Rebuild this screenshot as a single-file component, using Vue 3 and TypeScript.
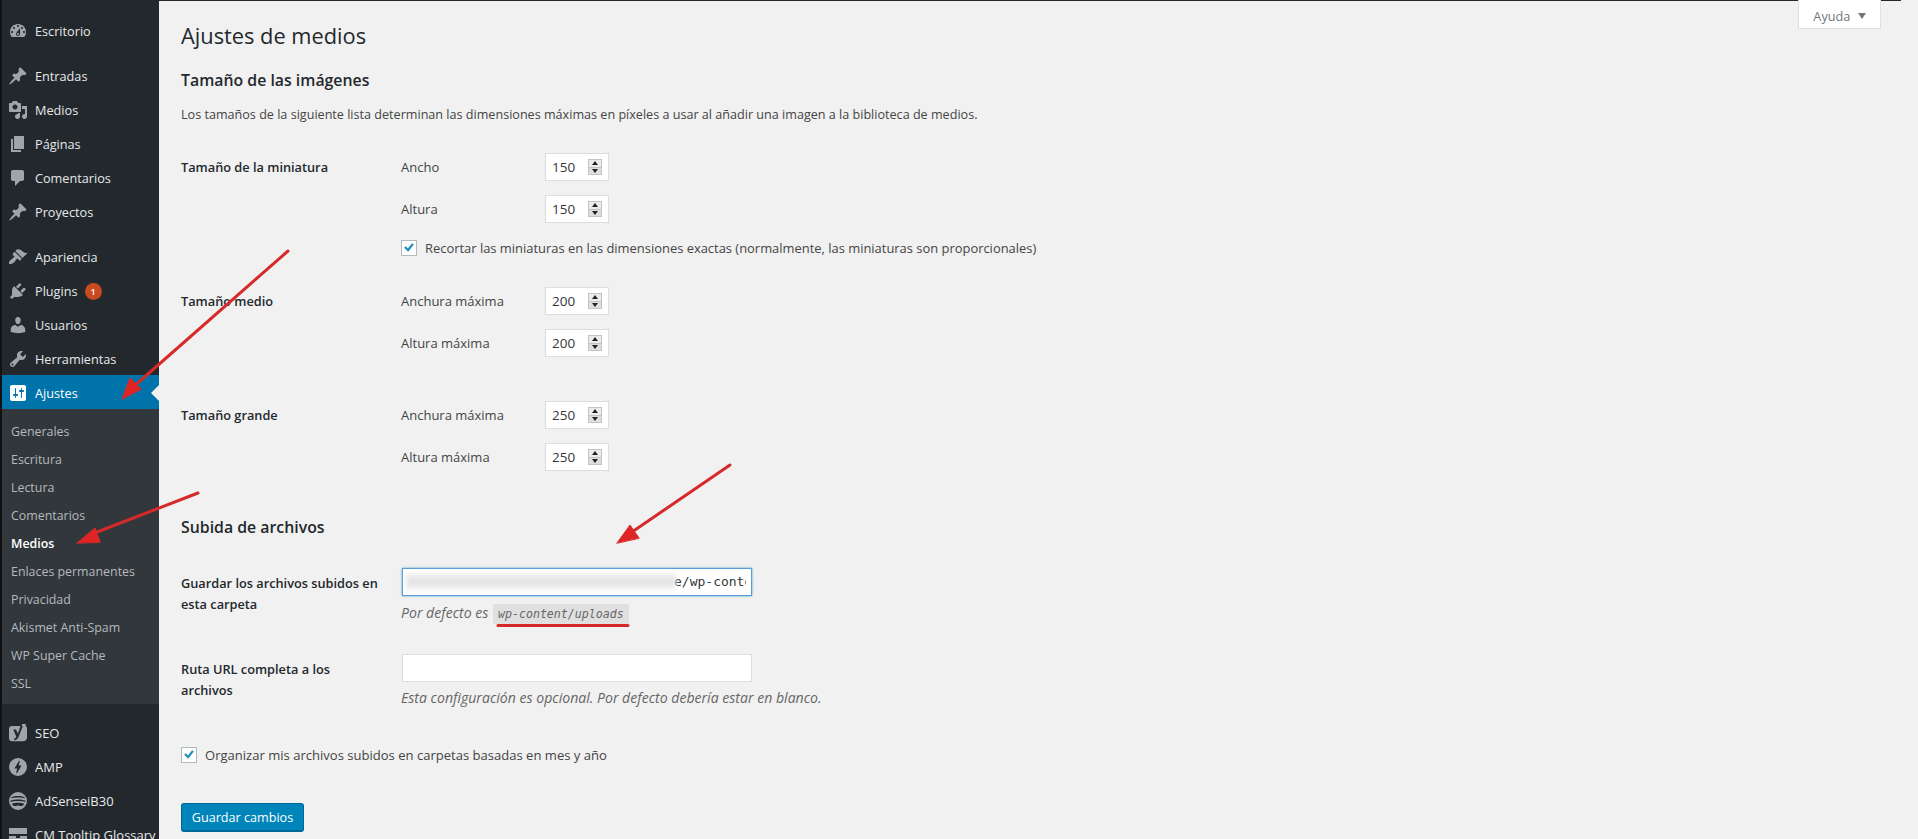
<script setup lang="ts">
interface Item { label: string; icon: string; gapBefore?: boolean; badge?: string }
const icons: Record<string, string> = {
  dash: 'M3.76 16h12.48c1.1-1.37 1.76-3.11 1.76-5 0-4.42-3.58-8-8-8s-8 3.58-8 8c0 1.89.66 3.63 1.76 5zM10 4c.55 0 1 .45 1 1s-.45 1-1 1-1-.45-1-1 .45-1 1-1zM6 6c.55 0 1 .45 1 1s-.45 1-1 1-1-.45-1-1 .45-1 1-1zm8 0c.55 0 1 .45 1 1s-.45 1-1 1-1-.45-1-1 .45-1 1-1zm-5.37 5.55L12 7v6c0 1.1-.9 2-2 2s-2-.9-2-2c0-.57.24-1.08.63-1.45zM4 10c.55 0 1 .45 1 1s-.45 1-1 1-1-.45-1-1 .45-1 1-1zm12 0c.55 0 1 .45 1 1s-.45 1-1 1-1-.45-1-1 .45-1 1-1zm-5 3c0-.55-.45-1-1-1s-1 .45-1 1 .45 1 1 1 1-.45 1-1z',
  post: 'M10.44 3.02l1.82-1.82 6.36 6.35-1.83 1.82c-1.05-.68-2.48-.57-3.41.36l-.75.75c-.92.93-1.04 2.35-.35 3.41l-1.83 1.82-2.41-2.41-2.8 2.79c-.42.42-3.38 2.71-3.8 2.29s1.86-3.39 2.28-3.81l2.79-2.79L4.1 9.36l1.83-1.82c1.05.69 2.48.57 3.4-.36l.75-.75c.93-.92 1.05-2.35.36-3.41z',
  media: 'M13 11V4c0-.55-.45-1-1-1h-1.67L9 1H5L3.67 3H2c-.55 0-1 .45-1 1v7c0 .55.45 1 1 1h10c.55 0 1-.45 1-1zM7 4.5c1.38 0 2.5 1.12 2.5 2.5S8.38 9.5 7 9.5 4.5 8.38 4.5 7 5.62 4.5 7 4.5zM14 6h5v10.5c0 1.38-1.12 2.5-2.5 2.5S14 17.88 14 16.5s1.12-2.5 2.5-2.5c.17 0 .34.02.5.05V9h-3V6zm-4 8.05V13h2v3.5c0 1.38-1.12 2.5-2.5 2.5S7 17.88 7 16.5 8.12 14 9.5 14c.17 0 .34.02.5.05z',
  page: 'M6 15V2h10v13H6zm-1 1h8v2H3V5h2v11z',
  comment: 'M5 2h9c1.1 0 2 .9 2 2v7c0 1.1-.9 2-2 2h-2l-5 5v-5H5c-1.1 0-2-.9-2-2V4c0-1.1.9-2 2-2z',
  brush: 'M14.48 11.06L7.41 3.99l1.5-1.5c.5-.56 2.3-.47 3.51.32 1.21.8 1.43 1.28 2.91 2.1 1.18.64 2.45 1.26 4.45.85zm-.71.71L6.7 4.7 4.93 6.47c-.39.39-.39 1.02 0 1.41l1.06 1.06c.39.39.39 1.03 0 1.42-.6.6-1.43 1.11-2.21 1.69-.35.26-.7.53-1.01.84C1.43 13.23.91 15.04 1.05 17.01c1.96.14 3.78-.38 5.12-1.72.31-.31.58-.66.84-1.01.58-.78 1.09-1.61 1.69-2.21.39-.39 1.02-.39 1.41 0l1.06 1.06c.39.39 1.02.39 1.41 0z',
  plugin: 'M13.11 4.36L9.87 7.6 8 5.73l3.24-3.24c.35-.34 1.05-.2 1.56.32.52.51.66 1.21.31 1.55zm-8 1.77l.91-1.12 9.01 9.01-1.19.84c-.71.71-2.63 1.16-3.82 1.16H6.14L4.9 17.26c-.59.59-1.54.59-2.12 0-.59-.58-.59-1.53 0-2.12l1.24-1.24v-3.88c0-1.13.4-3.19 1.09-3.89zm7.26 3.97l3.24-3.24c.34-.35 1.04-.21 1.55.31.52.51.66 1.21.31 1.55l-3.24 3.25z',
  users: 'M10 9.25c-2.27 0-2.73-3.44-2.73-3.44C7 4.02 7.82 2 9.97 2c2.16 0 2.98 2.02 2.71 3.81 0 0-.41 3.44-2.68 3.44zm0 2.57L12.72 10c2.39 0 4.52 2.33 4.52 4.53v2.49s-3.65 1.13-7.24 1.13c-3.65 0-7.24-1.13-7.24-1.13v-2.49c0-2.25 1.94-4.48 4.47-4.48z',
  tools: 'M16.68 9.77c-1.34 1.34-3.3 1.67-4.95.99l-5.41 6.52c-.99.99-2.59.99-3.58 0s-.99-2.59 0-3.57l6.52-5.42c-.68-1.65-.35-3.61.99-4.95 1.28-1.28 3.12-1.62 4.72-1.06l-2.89 2.89 2.82 2.82 2.86-2.87c.53 1.58.18 3.39-1.08 4.65zM3.81 16.21c.4.39 1.04.39 1.43 0 .4-.4.4-1.04 0-1.43-.39-.4-1.03-.4-1.43 0-.39.39-.39 1.03 0 1.43z',
  settings: 'M18 16V4c0-1.1-.9-2-2-2H4c-1.1 0-2 .9-2 2v12c0 1.1.9 2 2 2h12c1.1 0 2-.9 2-2zM8 11h1c.55 0 1 .45 1 1s-.45 1-1 1H8v1.5c0 .28-.22.5-.5.5s-.5-.22-.5-.5V13H6c-.55 0-1-.45-1-1s.45-1 1-1h1V5.5c0-.28.22-.5.5-.5s.5.22.5.5V11zm5-2h-1c-.55 0-1-.45-1-1s.45-1 1-1h1V5.5c0-.28.22-.5.5-.5s.5.22.5.5V7h1c.55 0 1 .45 1 1s-.45 1-1 1h-1v5.5c0 .28-.22.5-.5.5s-.5-.22-.5-.5V9z',
  seo: 'M4 3h9.500L14.300 1H18l-.6 1.700C18.400 3.200 19 4.200 19 5.500v9c0 2.300-1.600 3.800-4 3.800H4c-1.700 0-3-1.300-3-3V6c0-1.700 1.300-3 3-3zM5.300 6.400l3 7.300c-.3 1-.9 1.500-2.100 1.700v1.800c2.300 0 3.500-1 4.400-3.400L14.900 3h-2.400l-2.600 7.700-1.900-4.300z',
  amp: 'M10 1a9 9 0 1 0 0 18 9 9 0 0 0 0-18zm-1.100 15.200-.7-.1 1-4.600H7c-.5 0-.5-.3-.3-.6l4.400-7.100.7.100-1 4.600h2.200c.4 0 .5.3.3.6z',
  ads: 'M10 1a9 9 0 1 0 0 18 9 9 0 0 0 0-18zM3.600 6.200C6.600 4.700 13.400 4.700 16.400 6.200l.5 1.400C13.400 6.200 6.600 6.200 3.100 7.600zM2.600 9.600c4.200-1.500 10.600-1.500 14.800 0l.1 1.500c-4.400-1.400-10.600-1.400-15 0zm1.400 3.100c1.600-.7 3.800-1 6-1s4.400.3 6 1c-.3 1.700-1.600 2.400-3.200 2.400-1.200 0-2-.7-2.800-.7s-1.600.7-2.800.7c-1.600 0-2.900-.7-3.200-2.400z',
  cm: 'M1 3h18v6H1zM1 11h7v2h4v-2h7v6H1z'
}
const top: Item[] = [
  { label: 'Escritorio', icon: 'dash' },
  { label: 'Entradas', icon: 'post', gapBefore: true },
  { label: 'Medios', icon: 'media' },
  { label: 'Páginas', icon: 'page' },
  { label: 'Comentarios', icon: 'comment' },
  { label: 'Proyectos', icon: 'post' },
  { label: 'Apariencia', icon: 'brush', gapBefore: true },
  { label: 'Plugins', icon: 'plugin', badge: '1' },
  { label: 'Usuarios', icon: 'users' },
  { label: 'Herramientas', icon: 'tools' }
]
const sub = ['Generales', 'Escritura', 'Lectura', 'Comentarios', 'Medios', 'Enlaces permanentes', 'Privacidad', 'Akismet Anti-Spam', 'WP Super Cache', 'SSL']
const bottom: Item[] = [
  { label: 'SEO', icon: 'seo' },
  { label: 'AMP', icon: 'amp' },
  { label: 'AdSenseiB30', icon: 'ads' },
  { label: 'CM Tooltip Glossary', icon: 'cm' }
]
interface Size { title: string; cls: string; rows: [string, string][]; crop?: boolean }
const sizes: Size[] = [
  { title: 'Tamaño de la miniatura', cls: 'thumb', rows: [['Ancho', '150'], ['Altura', '150']], crop: true },
  { title: 'Tamaño medio', cls: 'mid', rows: [['Anchura máxima', '200'], ['Altura máxima', '200']] },
  { title: 'Tamaño grande', cls: 'big', rows: [['Anchura máxima', '250'], ['Altura máxima', '250']] }
]
</script>

<template>
  <div class="page">
    <aside class="side">
      <ul class="menu">
        <li v-for="m in top" :key="m.label" class="item" :class="{ gap: m.gapBefore }">
          <svg class="ico" viewBox="0 0 20 20"><path :d="icons[m.icon]" fill-rule="evenodd" /></svg>
          <span>{{ m.label }}</span>
          <b v-if="m.badge" class="badge">{{ m.badge }}</b>
        </li>
        <li class="item current">
          <svg class="ico" viewBox="0 0 20 20"><path :d="icons.settings" /></svg>
          <span>Ajustes</span>
        </li>
      </ul>
      <ul class="sub">
        <li v-for="s in sub" :key="s" :class="{ on: s === 'Medios' }">{{ s }}</li>
      </ul>
      <ul class="menu lower">
        <li v-for="m in bottom" :key="m.label" class="item">
          <svg class="ico" viewBox="0 0 20 20"><path :d="icons[m.icon]" fill-rule="evenodd" /></svg>
          <span>{{ m.label }}</span>
        </li>
      </ul>
    </aside>

    <main class="main">
      <div class="help">Ayuda <i class="tri"></i></div>
      <h1>Ajustes de medios</h1>
      <h2 class="h-sizes">Tamaño de las imágenes</h2>
      <p class="intro">Los tamaños de la siguiente lista determinan las dimensiones máximas en píxeles a usar al añadir una imagen a la biblioteca de medios.</p>

      <section v-for="s in sizes" :key="s.title" class="size" :class="s.cls">
        <div class="th">{{ s.title }}</div>
        <div class="td">
          <div v-for="r in s.rows" :key="r[0]" class="num-row">
            <label>{{ r[0] }}</label>
            <div class="num">
              <span>{{ r[1] }}</span>
              <span class="spin"><i class="up"></i><i class="down"></i></span>
            </div>
          </div>
          <div v-if="s.crop" class="check crop">
            <span class="box"><svg viewBox="0 0 16 16"><path d="M2.500 7.800l1.800-1.800 2.500 2.500 4.700-6 2 1.500-6.400 8.200z" /></svg></span>
            Recortar las miniaturas en las dimensiones exactas (normalmente, las miniaturas son proporcionales)
          </div>
        </div>
      </section>

      <h2 class="h-upload">Subida de archivos</h2>

      <section class="field first">
        <div class="th">Guardar los archivos subidos en esta carpeta</div>
        <div class="td">
          <div class="text focus"><span class="val">e/wp-content</span><span class="blur"></span></div>
          <p class="desc">Por defecto es <code>wp-content/uploads</code></p>
        </div>
      </section>
      <section class="field second">
        <div class="th">Ruta URL completa a los archivos</div>
        <div class="td">
          <div class="text"></div>
          <p class="desc">Esta configuración es opcional. Por defecto debería estar en blanco.</p>
        </div>
      </section>

      <div class="check organize">
        <span class="box"><svg viewBox="0 0 16 16"><path d="M2.500 7.800l1.800-1.800 2.500 2.500 4.700-6 2 1.500-6.400 8.200z" /></svg></span>
        Organizar mis archivos subidos en carpetas basadas en mes y año
      </div>
      <button class="save" type="button">Guardar cambios</button>
    </main>

    <svg class="marks" viewBox="0 0 1918 839" width="1918" height="839">
      <g fill="#e02424" stroke="#d62a2a" stroke-width="3" stroke-linecap="round">
        <line x1="288" y1="251" x2="132" y2="388" />
        <path d="M122 399l8-21 11 11z" stroke-width="1" />
        <line x1="198" y1="493" x2="92" y2="534" />
        <path d="M77 543l18-15 5 14z" stroke-width="1" />
        <line x1="730" y1="465" x2="632" y2="532" />
        <path d="M617 543l13-18 9 13z" stroke-width="1" />
        <line x1="498" y1="625.500" x2="628" y2="625.500" stroke-width="3" />
      </g>
    </svg>
  </div>
</template>

<style>
html, body { margin: 0; background: #f1f1f1; }
</style>

<style scoped>
.page {
  position: relative;
  display: flex;
  height: 839px;
  overflow: hidden;
  background: #f1f1f1;
  font-family: "Open Sans", "Noto Sans", sans-serif;
  font-size: 13px;
  color: #444;
}
.side {
  flex: 0 0 157px;
  margin-left: 2px;
  overflow: hidden;
  background: #23282d;
  color: #e6e8ea;
  font-size: 12.7px;
  box-shadow: -2px 0 0 #0f1112;
}
ul { list-style: none; margin: 0; padding: 0; }
.menu { padding-top: 14px; }
.item {
  display: flex;
  align-items: center;
  height: 34px;
  box-sizing: border-box;
  position: relative;
  white-space: nowrap;
}
.item.gap { margin-top: 11px; }
.ico { width: 20px; height: 20px; margin: 0 7px 0 6px; flex: none; fill: #a0a5aa; }
.badge {
  display: inline-block;
  width: 17px;
  height: 17px;
  line-height: 17px;
  margin-left: 7px;
  border-radius: 50%;
  background: #ca4a1f;
  color: #fff;
  font-size: 9px;
  font-weight: 600;
  text-align: center;
}
.current { margin-top: -1px; padding-top: 2px; background: #0073aa; color: #fff; }
.current .ico { fill: #fff; }
.current::after {
  content: "";
  position: absolute;
  right: 0;
  top: 10px;
  border: 8px solid transparent;
  border-right-color: #f1f1f1;
  border-left-width: 0;
}
.sub { background: #32373c; padding: 9px 0 6px 9px; color: #b4b9be; font-size: 12.4px; }
.sub li { height: 28px; line-height: 28px; }
.sub .on { color: #fff; font-weight: 600; }
.lower { padding-top: 12px; font-size: 13px; }

.main { position: relative; flex: 1; padding-left: 22px; box-shadow: inset 0 1px 0 #23282d; }
.main::after {
  content: "";
  position: absolute;
  right: 0;
  top: 0;
  width: 17px;
  height: 1px;
  background: #f1f1f1;
}
.help {
  position: absolute;
  top: 0;
  right: 37px;
  width: 83px;
  height: 29px;
  box-sizing: border-box;
  padding-top: 7px;
  text-align: center;
  background: #fff;
  border: 1px solid #e1e1e1;
  border-top: 0;
  color: #72777c;
  font-size: 12.7px;
}
.tri {
  display: inline-block;
  margin-left: 4px;
  vertical-align: 2px;
  border: 4px solid transparent;
  border-top: 6px solid #72777c;
  border-bottom: 0;
}
h1 { margin: 0; padding-top: 20px; font-size: 21.8px; line-height: 32px; font-weight: 400; color: #23282d; }
h2 { margin: 0; font-size: 15.85px; line-height: 22px; font-weight: 600; color: #23282d; }
.h-sizes { margin-top: 17px; }
.intro { margin: 14px 0 0; line-height: 20px; font-size: 12.6px; }
.size, .field { display: flex; }
.th { flex: 0 0 200px; margin-right: 20px; color: #23282d; font-size: 12.75px; font-weight: 600; line-height: 20.5px; }
.thumb { margin-top: 28px; }
.mid { margin-top: 29px; }
.big { margin-top: 44px; }
.size .th { padding-top: 4px; }
.num-row { display: flex; align-items: center; height: 28px; margin-bottom: 14px; }
.num-row:last-of-type { margin-bottom: 0; }
.num-row label { flex: 0 0 144px; }
.num {
  width: 64px;
  height: 28px;
  box-sizing: border-box;
  display: flex;
  align-items: center;
  justify-content: space-between;
  padding: 0 6px;
  background: #fff;
  border: 1px solid #ddd;
  color: #32373c;
  font-size: 13.5px;
}
.spin {
  display: flex;
  flex-direction: column;
  width: 14px;
  height: 16px;
  box-sizing: border-box;
  border: 1px solid #c4c4c4;
  background: #ebebeb;
}
.spin i { flex: 1; display: flex; align-items: center; justify-content: center; }
.spin i::after { content: ""; border: 3px solid transparent; }
.spin .up::after { border-top: 0; border-bottom: 4px solid #222; }
.spin .down { border-top: 1px solid #c4c4c4; background: #dedede; }
.spin .down::after { border-bottom: 0; border-top: 4px solid #222; }
.check { display: flex; align-items: center; height: 20px; white-space: nowrap; }
.box {
  flex: none;
  width: 16px;
  height: 16px;
  margin-right: 8px;
  box-sizing: border-box;
  background: #fff;
  border: 1px solid #b4b9be;
}
.box svg { display: block; width: 14px; height: 14px; fill: #1e8cbe; }
.crop { margin-top: 15px; font-size: 12.93px; }
.h-upload { margin-top: 45px; }
.first { margin-top: 30px; }
.second { margin-top: 30px; }
.second .desc { margin-top: 6px; }
.field .th { padding-top: 5px; }
.text {
  position: relative;
  width: 350px;
  height: 28px;
  margin-left: 1px;
  box-sizing: border-box;
  background: #fff;
  border: 1px solid #ddd;
}
.focus { border-color: #5b9dd9; box-shadow: 0 0 2px rgba(30, 140, 190, .8); }
.val {
  position: absolute;
  left: 271px;
  right: 5px;
  top: 0;
  overflow: hidden;
  white-space: nowrap;
  font-family: "DejaVu Sans Mono", monospace;
  font-size: 13px;
  line-height: 26px;
  color: #32373c;
}
.blur {
  position: absolute;
  left: 3px;
  top: 4px;
  width: 270px;
  height: 17px;
  background: linear-gradient(#f3f3f3, #e2e2e2 50%, #f3f3f3);
  filter: blur(2px);
}
.desc { margin: 7px 0 0; font-size: 14.08px; font-style: italic; color: #666; line-height: 20px; }
code {
  margin-left: 1px;
  padding: 3px 5px 3px;
  background: rgba(0, 0, 0, .07);
  font-family: "DejaVu Sans Mono", monospace;
  font-size: 11.6px;
}
.organize { margin-top: 37px; font-size: 13.05px; }
.save {
  display: block;
  margin-top: 38px;
  width: 123px;
  height: 29px;
  padding: 0;
  background: #0085ba;
  border: 1px solid #006799;
  border-bottom-width: 2px;
  border-radius: 3px;
  color: #fff;
  font: inherit;
  font-size: 12.6px;
}
.marks { position: absolute; left: 0; top: 0; pointer-events: none; }
</style>
